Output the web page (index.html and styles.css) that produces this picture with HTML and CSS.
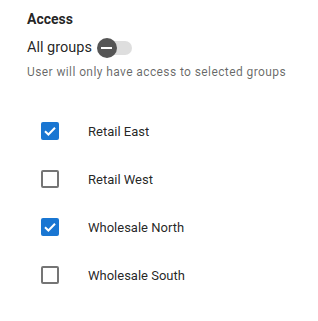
FILE: index.html
```html
<!DOCTYPE html>
<html>
<head>
<meta charset="utf-8">
<link rel="stylesheet" href="styles.css">
</head>
<body>
<div class="panel">
  <div class="title">Access</div>
  <div class="toggle-row">
    <span class="toggle-label">All groups</span>
    <span class="switch">
      <span class="track"></span>
      <span class="thumb"><span class="minus"></span></span>
    </span>
  </div>
  <div class="helper">User will only have access to selected groups</div>
  <ul class="list">
    <li class="item">
      <span class="box checked"><svg viewBox="0 0 18 18" width="18" height="18"><path d="M4 9.2 L7.4 12.5 L14 5.8" fill="none" stroke="#fff" stroke-width="2"/></svg></span>
      <span class="label">Retail East</span>
    </li>
    <li class="item">
      <span class="box"></span>
      <span class="label">Retail West</span>
    </li>
    <li class="item">
      <span class="box checked"><svg viewBox="0 0 18 18" width="18" height="18"><path d="M4 9.2 L7.4 12.5 L14 5.8" fill="none" stroke="#fff" stroke-width="2"/></svg></span>
      <span class="label">Wholesale North</span>
    </li>
    <li class="item">
      <span class="box"></span>
      <span class="label">Wholesale South</span>
    </li>
  </ul>
</div>
</body>
</html>
```
FILE: styles.css
```css
html, body {
  margin: 0;
  padding: 0;
  background: #fff;
}
body {
  font-family: Roboto, "Liberation Sans", sans-serif;
  color: rgba(0, 0, 0, 0.87);
}
.panel {
  padding: 9px 0 0 27px;
  display: flex;
  flex-direction: column;
}
.title {
  font-size: 14px;
  font-weight: 700;
  line-height: 20px;
}
.toggle-row {
  margin-top: 7px;
  display: flex;
  align-items: center;
  gap: 5px;
  height: 24px;
}
.toggle-label {
  font-size: 14.5px;
  line-height: 24px;
}
.switch {
  position: relative;
  width: 36px;
  height: 20px;
  display: inline-block;
}
.track {
  position: absolute;
  left: 1px;
  top: 3px;
  width: 34px;
  height: 14px;
  border-radius: 7px;
  background: #dedede;
}
.thumb {
  position: absolute;
  left: 0;
  top: 0;
  width: 20px;
  height: 20px;
  border-radius: 50%;
  background: #555;
  display: flex;
  align-items: center;
  justify-content: center;
}
.minus {
  width: 11px;
  height: 2px;
  background: #fff;
}
.helper {
  margin-top: 2px;
  font-size: 12px;
  letter-spacing: 0.4px;
  line-height: 20px;
  color: rgba(0, 0, 0, 0.6);
}
.list {
  list-style: none;
  margin: 25px 0 0 0;
  padding: 0;
}
.item {
  height: 48px;
  display: flex;
  align-items: center;
  padding-left: 14px;
}
.box {
  width: 18px;
  height: 18px;
  box-sizing: border-box;
  border: 2px solid #757575;
  border-radius: 2px;
  flex: none;
}
.box.checked {
  border: none;
  background: #1976d2;
}
.box svg {
  display: block;
}
.label {
  margin-left: 29px;
  margin-top: 2px;
  font-size: 13px;
  line-height: 20px;
}
```
